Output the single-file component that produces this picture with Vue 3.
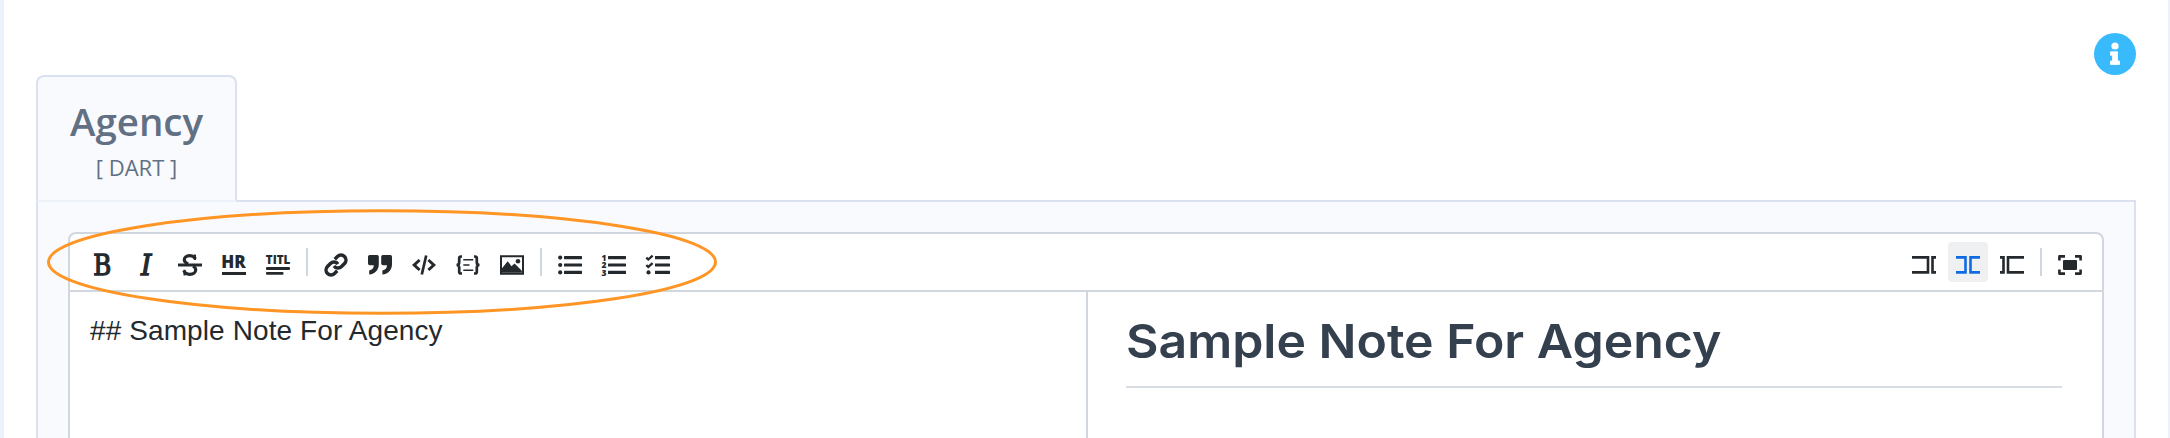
<script setup>
const leftGroups = [
  ['bold', 'italic', 'strike', 'hr', 'title'],
  ['link', 'quote', 'code', 'block', 'image'],
  ['ul', 'ol', 'task'],
]
</script>

<template>
  <div class="page">
    <header class="top">
      <div class="tab">
        <div class="name"><span>Agency</span></div>
        <div class="code"><span>[ DART ]</span></div>
      </div>
      <svg class="info" viewBox="0 0 42 42">
        <circle cx="21" cy="21" r="21" fill="#38bafc" />
        <circle cx="21" cy="13" r="3.6" fill="#fff" />
        <path d="M16.500 18.800h7v9.200h2v3.500h-9v-3.500h2v-5.700h-2z" fill="#fff" stroke="#fff" stroke-width=".8" stroke-linejoin="round" />
      </svg>
    </header>

    <main class="panel">
      <section class="editor">
        <div class="toolbar">
          <div class="group">
            <template v-for="(group, g) in leftGroups" :key="g">
              <i v-if="g" class="sep"></i>
              <span v-for="icon in group" :key="icon" class="btn">
                <svg class="icon" viewBox="0 0 24 24">
                  <text v-if="icon === 'bold'" class="slab" x="3.300" y="22" textLength="18" lengthAdjust="spacingAndGlyphs">B</text>
                  <text v-else-if="icon === 'italic'" class="slab ital" x="7" y="22" textLength="10.500" lengthAdjust="spacingAndGlyphs">I</text>
                  <g v-else-if="icon === 'strike'">
                    <g fill="none" stroke="#24292e" stroke-width="3.200">
                      <path d="M17.500 6C16 3.300 13.500 2.700 11.500 2.700 8.300 2.700 6.300 4.500 6.300 6.800c0 2 1.500 3.200 3.800 4.200" />
                      <path d="M5.800 17.500c1 2.800 3.200 3.800 6 3.800 3.700 0 5.900-1.800 5.900-4.300 0-1.800-1-3-2.700-3.900" />
                      <path d="M17 1.500V7M6.500 16.800v5.700" stroke-width="2" />
                    </g>
                    <path d="M0 10.500h24v3H0z" />
                  </g>
                  <g v-else-if="icon === 'hr'">
                    <text class="sans" x="-.8" y="14.500" font-size="17.500" textLength="24.500" lengthAdjust="spacingAndGlyphs">HR</text>
                    <path d="M0 19h24v3H0z" />
                  </g>
                  <g v-else-if="icon === 'title'">
                    <text class="sans" x="-.2" y="11" font-size="12" textLength="24.500" lengthAdjust="spacingAndGlyphs">TITL</text>
                    <rect y="14" width="24" height="3" rx="1" />
                    <rect y="19" width="17.500" height="2.700" rx="1" />
                  </g>
                  <g v-else-if="icon === 'link'" fill="none" stroke="#24292e" stroke-width="3.500">
                    <path d="M10 13a5 5 0 0 0 7.540.540l3-3a5 5 0 0 0-7.070-7.070l-2.700 2.700" />
                    <path d="M14 11a5 5 0 0 0-7.540-.540l-3 3a5 5 0 0 0 7.070 7.070l2.700-2.700" />
                  </g>
                  <g v-else-if="icon === 'quote'">
                    <path d="M1.700 2h7.500q1.600 0 1.600 1.700v7.300c0 6-3.600 10-9.600 10.500v-4c3-.6 4.500-2.200 4.600-5.200H1.700Q0 12.300 0 10.600V3.700Q0 2 1.700 2z" />
                    <path transform="translate(13.200)" d="M1.700 2h7.500q1.600 0 1.600 1.700v7.300c0 6-3.600 10-9.600 10.500v-4c3-.6 4.500-2.200 4.600-5.200H1.700Q0 12.300 0 10.600V3.700Q0 2 1.700 2z" />
                  </g>
                  <g v-else-if="icon === 'code'" fill="none" stroke="#24292e">
                    <path d="M7.600 7L2.200 12l5.400 5M16.400 7l5.400 5-5.400 5" stroke-width="3" />
                    <path d="M14.200 2.500L9.800 21.500" stroke-width="2.700" />
                  </g>
                  <g v-else-if="icon === 'block'" fill="none" stroke="#24292e">
                    <path d="M6 3.500H5Q3.200 3.500 3.200 5.300v4.200Q3.200 12 .5 12 3.200 12 3.200 14.500v4.200q0 1.800 1.800 1.800h1M18 3.500h1q1.800 0 1.800 1.800v4.200q0 2.500 2.700 2.500-2.700 0-2.700 2.500v4.200q0 1.800-1.800 1.800h-1" stroke-width="2.700" />
                    <path d="M7.300 6.800h10M7.300 12h6.200M7.300 17.300h10" stroke-width="1.400" />
                  </g>
                  <g v-else-if="icon === 'image'">
                    <path d="M1 3.300h22v17.400H1z" fill="none" stroke="#24292e" stroke-width="2" />
                    <path d="M1.800 19.800v-4.200L7.700 8.200l3.800 5 3-2.700 4.300 4.200 3 3v2.100z" />
                    <circle cx="18" cy="8.200" r="2.300" />
                  </g>
                  <g v-else>
                    <path d="M6.600 3H23.400q.6 0 .6.600v2q0 .6-.6.600H6.600q-.6 0-.6-.6v-2q0-.6.6-.6zM6.600 10.400H23.400q.6 0 .6.600v2q0 .6-.6.600H6.600q-.6 0-.6-.6v-2q0-.6.6-.6zM6.600 17.800H23.400q.6 0 .6.600v2q0 .6-.6.600H6.600q-.6 0-.6-.6v-2q0-.6.6-.6z" />
                    <g v-if="icon === 'ul'">
                      <circle cx="2.200" cy="4.600" r="2.100" /><circle cx="2.200" cy="12" r="2.100" /><circle cx="2.200" cy="19.400" r="2.100" />
                    </g>
                    <g v-else-if="icon === 'ol'" class="sans" font-size="8.500">
                      <text x="-.6" y="7.700">1</text><text x="-.6" y="15.200">2</text><text x="-.6" y="22.700">3</text>
                    </g>
                    <g v-else>
                      <path d="M6 2.500h3v19H6z" fill="#fff" />
                      <path d="M.3 4.700l2 1.800L6.600 2.700M.3 12.100l2 1.800 4.300-3.800" fill="none" stroke="#24292e" stroke-width="2.300" />
                      <circle cx="2.500" cy="19.400" r="2.100" />
                    </g>
                  </g>
                </svg>
              </span>
            </template>
          </div>
          <div class="group">
            <span class="btn">
              <svg class="icon line" viewBox="0 0 24 24"><path d="M0 4.400h16v15H0M24 4.400h-3.500v15h3.500" /></svg>
            </span>
            <span class="btn active">
              <svg class="icon line" viewBox="0 0 24 24"><path d="M0 4.400h9.500v15H0M24 4.400h-9.500v15h9.500" /></svg>
            </span>
            <span class="btn">
              <svg class="icon line" viewBox="0 0 24 24"><path d="M0 4.400h3.500v15H0M24 4.400H8v15h16" /></svg>
            </span>
            <i class="sep"></i>
            <span class="btn">
              <svg class="icon" viewBox="0 0 24 24">
                <rect x="5" y="7" width="14" height="10" rx="1" />
                <path d="M1.400 7.500V3.400H7M17 3.400h5.600V7.500M22.600 16.500v4.100H17M7 20.600H1.400V16.500" fill="none" stroke="#24292e" stroke-width="2.600" stroke-linejoin="round" />
              </svg>
            </span>
          </div>
        </div>
        <div class="body">
          <div class="source"><span>## Sample Note For Agency</span></div>
          <div class="preview"><h2><span>Sample Note For Agency</span></h2></div>
        </div>
      </section>
    </main>

    <svg class="ring" viewBox="0 0 672 106">
      <ellipse cx="336" cy="53" rx="333.500" ry="51.300" fill="none" stroke="#ff9524" stroke-width="3" />
    </svg>
  </div>
</template>

<style>
body { margin: 0; }
</style>

<style scoped>
.page {
  position: relative;
  box-sizing: border-box;
  width: 2170px;
  height: 438px;
  overflow: hidden;
  padding: 0 32px;
  background: #fff;
  border-left: 4px solid #edf2fa;
  border-right: 2px solid #edf2fa;
  display: flex;
  flex-direction: column;
}
.top {
  display: flex;
  justify-content: space-between;
  align-items: flex-start;
  height: 200px;
  flex: none;
}
.tab {
  box-sizing: border-box;
  position: relative;
  z-index: 1;
  width: 201px;
  height: 127px;
  margin-top: 75px;
  border: 2px solid #dae2f0;
  border-bottom-color: #edf2f9;
  border-radius: 8px 8px 0 0;
  background: #f9fafe;
  color: #627084;
  font-family: "Open Sans", sans-serif;
  text-align: center;
  white-space: nowrap;
}
.name {
  margin-top: 18px;
  font-size: 38.500px;
  line-height: 52px;
  font-weight: 600;
}
.code {
  margin-top: 5px;
  font-size: 22px;
  line-height: 30px;
}
.info {
  width: 42px;
  height: 42px;
  margin: 32.500px .5px 0 0;
}
.panel {
  box-sizing: border-box;
  width: 2100px;
  flex: 1;
  padding: 30px 30px 0;
  border: 2px solid #dae2f0;
  border-bottom: 0;
  background: #f9fafe;
  display: flex;
}
.editor {
  flex: 1;
  border: 2px solid #d1d7df;
  border-bottom: 0;
  border-radius: 8px 8px 0 0;
  background: #fff;
  display: flex;
  flex-direction: column;
}
.toolbar {
  display: flex;
  justify-content: space-between;
  padding: 8px 12px;
  border-bottom: 2px solid #d1d7df;
}
.group {
  display: flex;
  align-items: center;
  gap: 4px;
}
.btn {
  box-sizing: border-box;
  width: 40px;
  height: 40px;
  padding: 11px 8px 0;
  border-radius: 4px;
}
.active {
  background: #eff0f2;
}
.sep {
  width: 2px;
  height: 28px;
  margin: 0 4px;
  background: #d1d7df;
}
.icon {
  display: block;
  width: 24px;
  height: 24px;
  overflow: visible;
  fill: #24292e;
}
.line path {
  fill: none;
  stroke: #24292e;
  stroke-width: 2.600;
}
.active .line path {
  stroke: #116be0;
}
.slab {
  font: 27px "DejaVu Serif", serif;
  stroke: #24292e;
  stroke-width: 1.300;
}
.ital {
  font-style: italic;
}
.sans {
  font-family: "Open Sans", sans-serif;
  font-weight: 800;
}
.body {
  flex: 1;
  display: flex;
}
.source {
  box-sizing: border-box;
  width: 1018px;
  padding: 21.500px 20px;
  border-right: 2px solid #d1d7df;
  color: #24292e;
  font: 28px/34px "Liberation Sans", Arial, sans-serif;
  letter-spacing: .1px;
  white-space: nowrap;
}
.preview {
  flex: 1;
  padding: 20px 40px 0 38px;
}
h2 {
  box-sizing: border-box;
  height: 76px;
  margin: 0;
  border-bottom: 2px solid #d8dce3;
  color: #35404f;
  font: 600 47px/58px Inter, sans-serif;
  white-space: nowrap;
}
h2 span {
  display: inline-block;
  transform: scaleX(1.063);
  transform-origin: 0 0;
}
.ring {
  position: absolute;
  left: 42px;
  top: 209px;
  width: 672px;
  height: 106px;
  z-index: 2;
}
</style>
